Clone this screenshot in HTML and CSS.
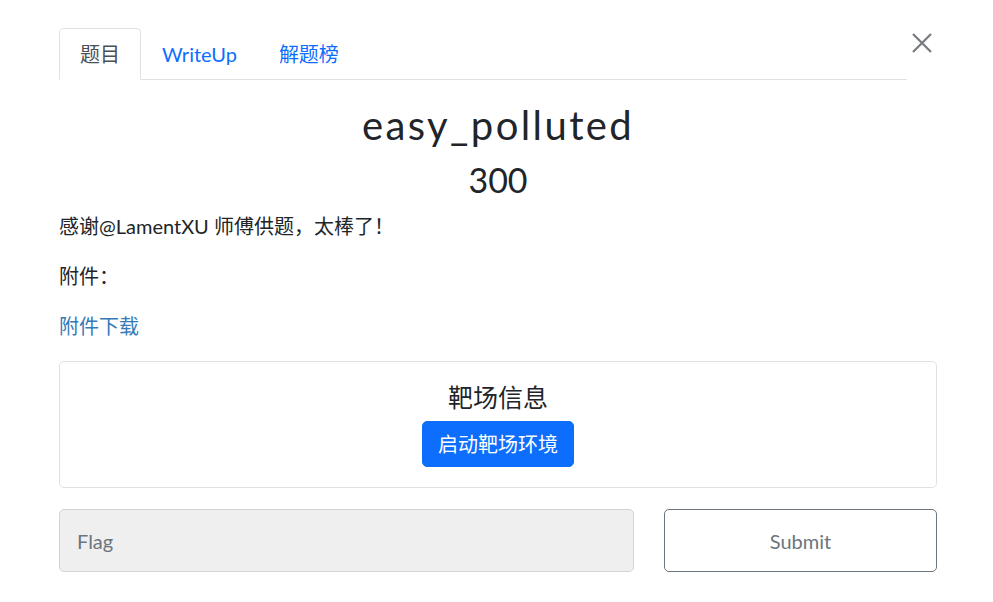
FILE: index.html
```html
<!DOCTYPE html>
<html lang="zh-CN">
<head>
<meta charset="utf-8">
<title>easy_polluted</title>
<link rel="stylesheet" href="styles.css">
</head>
<body>
<div class="modal">
  <button class="close" type="button" aria-label="Close">
    <svg width="20" height="20" viewBox="0 0 20 20" aria-hidden="true">
      <path d="M1 1 L19 19 M19 1 L1 19" stroke="#777b80" stroke-width="2.2" fill="none"/>
    </svg>
  </button>
  <ul class="tabs">
    <li class="tab active">题目</li>
    <li class="tab">WriteUp</li>
    <li class="tab">解题榜</li>
  </ul>
  <div class="pane">
    <h3 class="name">easy_polluted</h3>
    <h4 class="value">300</h4>
    <p class="desc">感谢@LamentXU 师傅供题，太棒了！</p>
    <p class="desc">附件：</p>
    <p class="desc"><a class="dl" href="#">附件下载</a></p>
    <div class="card">
      <h5 class="card-title">靶场信息</h5>
      <button class="btn-start" type="button">启动靶场环境</button>
    </div>
    <div class="submit-row">
      <input class="flag" type="text" placeholder="Flag">
      <button class="btn-submit" type="button">Submit</button>
    </div>
  </div>
</div>
</body>
</html>
```
FILE: styles.css
```css
* { box-sizing: border-box; }
html, body {
  margin: 0;
  background: #fff;
}
body {
  font-family: Lato, "Noto Sans CJK SC", sans-serif;
  font-size: 20px;
  line-height: 30px;
  color: #212529;
}
.modal {
  width: 878px;
  margin: 28px 0 0 59px;
}
.close {
  float: right;
  width: 30px;
  height: 40px;
  padding: 5px 0 0;
  margin: 0;
  border: 0;
  background: transparent;
  display: flex;
  justify-content: center;
  align-items: flex-start;
  cursor: pointer;
}
.tabs {
  display: flex;
  list-style: none;
  margin: 0;
  padding: 0;
  border-bottom: 1px solid #dee2e6;
}
.tab {
  padding: 10px 20px;
  border: 1px solid transparent;
  border-radius: 5px 5px 0 0;
  margin-bottom: -1px;
  color: #0d6efd;
}
.tab.active {
  color: #495057;
  background: #fff;
  border-color: #dee2e6 #dee2e6 #fff;
}
.pane {
  clear: both;
}
.name {
  margin: 21px 0 12px;
  text-align: center;
  font-size: 40px;
  line-height: 48px;
  font-weight: 400;
  letter-spacing: 2.4px;
}
.value {
  margin: 0 0 12px;
  text-align: center;
  font-size: 34px;
  line-height: 38px;
  font-weight: 400;
}
.desc {
  margin: 0 0 20px;
}
.dl {
  color: #337ab7;
  text-decoration: none;
}
.card {
  border: 1px solid #dee2e6;
  border-radius: 5px;
  padding: 20px;
  text-align: center;
  margin-bottom: 21px;
}
.card-title {
  margin: 0 0 9px;
  font-size: 25px;
  line-height: 30px;
  font-weight: 400;
}
.btn-start {
  font-family: inherit;
  font-size: 20px;
  line-height: 30px;
  padding: 7px 15px;
  color: #fff;
  background: #0d6efd;
  border: 1px solid #0d6efd;
  border-radius: 5px;
}
.submit-row {
  display: grid;
  grid-template-columns: 1fr 273px;
  column-gap: 30px;
}
.flag {
  font-family: inherit;
  font-size: 20px;
  line-height: 30px;
  height: 63px;
  padding: 15px 17px;
  background: #efefef;
  border: 1px solid #ced4da;
  border-radius: 5px;
  color: #495057;
}
.flag::placeholder {
  color: #6c757d;
}
.btn-submit {
  font-family: inherit;
  font-size: 20px;
  line-height: 30px;
  height: 63px;
  background: #fff;
  color: #6c757d;
  border: 1px solid #6c757d;
  border-radius: 5px;
}
```
